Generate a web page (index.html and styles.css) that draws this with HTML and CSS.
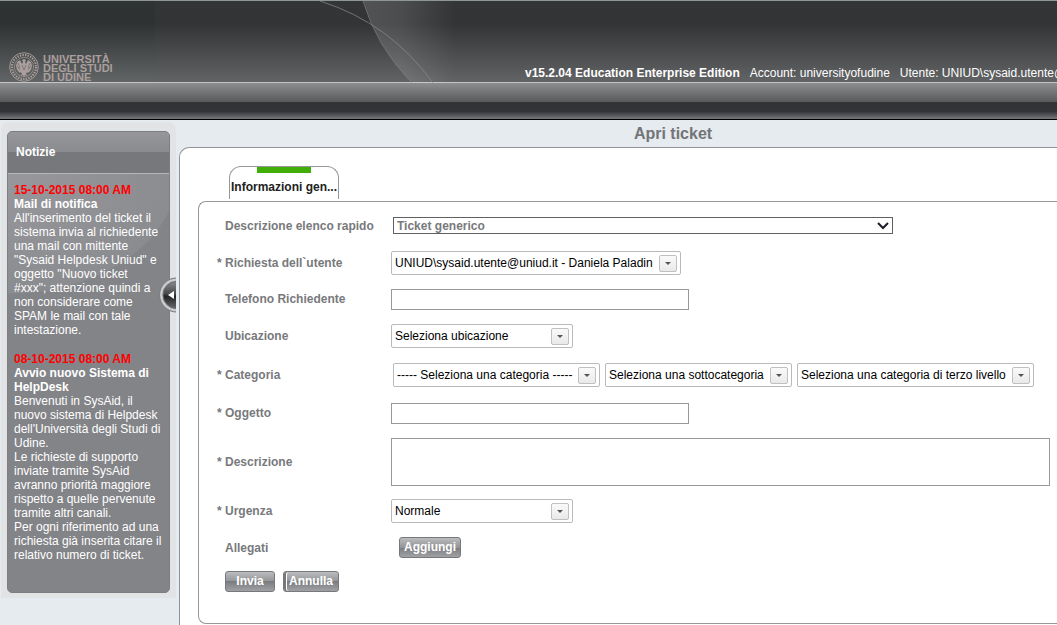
FILE: index.html
```html
<!DOCTYPE html>
<html lang="it">
<head>
<meta charset="utf-8">
<title>Apri ticket</title>
<link rel="stylesheet" href="styles.css">
</head>
<body>
<header class="header">
  <div class="banner">
    <svg class="banner-art" width="520" height="82" viewBox="0 0 520 82" aria-hidden="true">
      <defs>
        <linearGradient id="glow" gradientUnits="userSpaceOnUse" x1="363" x2="455" y1="0" y2="0">
          <stop offset="0" stop-color="#fff" stop-opacity=".15"/>
          <stop offset=".4" stop-color="#fff" stop-opacity=".12"/>
          <stop offset="1" stop-color="#fff" stop-opacity="0"/>
        </linearGradient>
      </defs>
      <path d="M363 0Q376 45 412 82H480V0Z" fill="url(#glow)"/>
      <path d="M320 0Q390 22 433 82" fill="none" stroke="#8b8d8e" stroke-opacity=".7"/>
      <path d="M363 0Q376 45 412 82" fill="none" stroke="#8b8d8e" stroke-opacity=".45"/>
    </svg>
    <div class="brand">
      <svg class="seal" width="30" height="30" viewBox="0 0 30 30" aria-hidden="true">
        <g fill="none" stroke="#aa9f9e">
          <circle cx="15" cy="15" r="14.3" stroke-width=".9"/>
          <circle cx="15" cy="15" r="12" stroke-width="2.2" stroke-dasharray="1.4 1.2"/>
          <circle cx="15" cy="15" r="9.6" stroke-width=".7"/>
        </g>
        <path d="M15 7l2 1-1 2 1 2 2-4 3 2 1 4-1 4-3 3-1-1-1 2 2 2-3-1-1 2-1-2-3 1 2-2-1-2-1 1-3-3-1-4 1-4 3-2 2 4 1-2-1-2z" fill="#aa9f9e"/>
        <path d="M9 11l2 5M21 11l-2 5M13 13l2 5 2-5M8 14l3 4M22 14l-3 4" stroke="#666868" stroke-width=".7" fill="none"/>
      </svg>
      <div class="brand-name">UNIVERSITÀ<br>DEGLI STUDI<br>DI UDINE</div>
    </div>
    <div class="account">
      <strong>v15.2.04 Education Enterprise Edition</strong>
      <span>Account: universityofudine</span>
      <span>Utente: UNIUD\sysaid.utente@</span>
    </div>
  </div>
  <div class="band"></div>
  <div class="band-dark"></div>
</header>
<div class="page">
  <aside class="sidebar">
    <section class="news">
      <h2 class="news-title">Notizie</h2>
      <div class="news-body">
        <article>
          <time class="news-date">15-10-2015 08:00 AM</time>
          <h3 class="news-head">Mail di notifica</h3>
          <p>All'inserimento del ticket il sistema invia al richiedente una mail con mittente "Sysaid Helpdesk Uniud" e oggetto "Nuovo ticket #xxx"; attenzione quindi a non considerare come SPAM le mail con tale intestazione.</p>
        </article>
        <article>
          <time class="news-date">08-10-2015 08:00 AM</time>
          <h3 class="news-head">Avvio nuovo Sistema di HelpDesk</h3>
          <p>Benvenuti in SysAid, il nuovo sistema di Helpdesk dell'Università degli Studi di Udine.</p>
          <p>Le richieste di supporto inviate tramite SysAid avranno priorità maggiore rispetto a quelle pervenute tramite altri canali.</p>
          <p>Per ogni riferimento ad una richiesta già inserita citare il relativo numero di ticket.</p>
        </article>
      </div>
    </section>
    <button class="collapse" type="button" aria-label="Nascondi notizie">
      <svg width="17" height="36" viewBox="0 0 17 36" aria-hidden="true">
        <defs>
          <linearGradient id="knob" x1="0" x2="0" y1="0" y2="1">
            <stop offset="0" stop-color="#8a8b8d"/>
            <stop offset=".45" stop-color="#48494b"/>
            <stop offset=".55" stop-color="#242527"/>
            <stop offset="1" stop-color="#66676a"/>
          </linearGradient>
        </defs>
        <circle cx="17.5" cy="18" r="17" fill="#bcbdbf" stroke="#7b7c7f"/>
        <circle cx="17.5" cy="18" r="15.5" fill="none" stroke="#d3d4d5"/>
        <circle cx="17.5" cy="18" r="13.5" fill="url(#knob)" stroke="#66676a"/>
        <path d="M9 18l6-4v8z" fill="#fff"/>
      </svg>
    </button>
  </aside>
  <main class="main">
    <h1 class="title">Apri ticket</h1>
    <div class="sheet">
      <button class="tab" type="button"><span class="tab-mark"></span>Informazioni gen...</button>
      <form class="form">
        <div class="row">
          <label class="label" for="quick">Descrizione elenco rapido</label>
          <div class="field inset">
            <span class="plain-select">
              <select id="quick"><option>Ticket generico</option></select>
              <svg class="chevron" width="12" height="8" viewBox="0 0 12 8" aria-hidden="true"><path d="M1 1l5 5 5-5" fill="none" stroke="#1c1c2c" stroke-width="2"/></svg>
            </span>
          </div>
        </div>
        <div class="row">
          <label class="label" for="user"><span class="star">*</span>Richiesta dell`utente</label>
          <div class="field"><span class="combo w-user"><select id="user"><option>UNIUD\sysaid.utente@uniud.it - Daniela Paladin</option></select></span></div>
        </div>
        <div class="row row-text">
          <label class="label" for="phone">Telefono Richiedente</label>
          <div class="field"><input class="text" id="phone" type="text"></div>
        </div>
        <div class="row">
          <label class="label" for="place">Ubicazione</label>
          <div class="field"><span class="combo w-short"><select id="place"><option>Seleziona ubicazione</option></select></span></div>
        </div>
        <div class="row row-mid">
          <label class="label" for="cat1"><span class="star">*</span>Categoria</label>
          <div class="field inset">
            <span class="combo w-cat1"><select id="cat1"><option>----- Seleziona una categoria -----</option></select></span>
            <span class="combo w-cat2"><select id="cat2" aria-label="Sottocategoria"><option>Seleziona una sottocategoria</option></select></span>
            <span class="combo w-cat3"><select id="cat3" aria-label="Categoria di terzo livello"><option>Seleziona una categoria di terzo livello</option></select></span>
          </div>
        </div>
        <div class="row row-text">
          <label class="label" for="subject"><span class="star">*</span>Oggetto</label>
          <div class="field"><input class="text" id="subject" type="text"></div>
        </div>
        <div class="row row-tall">
          <label class="label" for="desc"><span class="star">*</span>Descrizione</label>
          <div class="field"><textarea class="area" id="desc"></textarea></div>
        </div>
        <div class="row">
          <label class="label" for="urgency"><span class="star">*</span>Urgenza</label>
          <div class="field"><span class="combo w-short"><select id="urgency"><option>Normale</option></select></span></div>
        </div>
        <div class="row">
          <label class="label" for="attach">Allegati</label>
          <div class="field attach"><button class="btn" id="attach" type="button">Aggiungi</button></div>
        </div>
        <div class="actions">
          <button class="btn btn-send" type="submit">Invia</button>
          <button class="btn btn-cancel" type="reset">Annulla</button>
        </div>
      </form>
    </div>
  </main>
</div>
</body>
</html>
```

FILE: styles.css
```css
*, *::before, *::after { box-sizing: border-box; }

body {
  margin: 0;
  min-height: 100vh;
  display: flex;
  flex-direction: column;
  overflow-x: hidden;
  background: #e5ebee;
  font: 12px/14px "Liberation Sans", Arial, sans-serif;
}

h1, h2, h3, p { margin: 0; }
select, input, textarea, button { font: inherit; margin: 0; }

/* Header */
.header { border-bottom: 1px solid #000; overflow: hidden; }

.banner {
  position: relative;
  height: 83px;
  display: flex;
  align-items: flex-end;
  border-top: 1px solid #8f9696;
  border-bottom: 1px solid #c2c4c6;
  background: linear-gradient(#343537, #333436 28%, #626364);
}
.banner-art { position: absolute; left: 0; top: 0; }

.brand {
  position: relative;
  flex: 0 0 155px;
  align-self: stretch;
  display: flex;
  align-items: flex-end;
  gap: 4px;
  padding-left: 9px;
  background: linear-gradient(#2f3333, #2e3233 28%, #626565);
}
.brand-name {
  color: #aa9f9e;
  font-size: 11px;
  font-weight: bold;
  line-height: 9px;
  white-space: nowrap;
}
.seal { flex: none; }

.account {
  position: relative;
  display: flex;
  gap: 10px;
  margin-left: 370px;
  padding-bottom: 2px;
  color: #fff;
  white-space: nowrap;
}

.band { height: 19px; background: linear-gradient(#8d8e90, #58595b); }
.band-dark { height: 17px; background: linear-gradient(#323337, #333438 55%, #77787a); }

/* Page */
.page { flex: 1; display: flex; align-items: stretch; }

.sidebar {
  position: relative;
  flex: 0 0 175px;
  align-self: flex-start;
  margin: 2px 3px 0 1px;
  padding: 9px 6px 5px;
  border-radius: 8px 8px 0 0;
  background: #e2e3e5;
}
.news {
  border: 1px solid #7d7e82;
  border-radius: 5px;
  overflow: hidden;
  background: #838488;
  color: #fff;
}
.news-title {
  height: 42px;
  padding: 0 8px;
  font-size: 12px;
  line-height: 40px;
  border-bottom: 1px solid #b6b7b9;
  background: linear-gradient(#97979b, #8a8b8f 50%, #77787c 50%, #77787c);
}
.news-body {
  display: flex;
  flex-direction: column;
  gap: 15px;
  padding: 9px 7px 30px 6px;
  background: radial-gradient(ellipse 170px 120px at 0 0, #98989c, #8b8c90 99%, #838488);
}
.news-date { display: block; color: #f00; font-weight: bold; }
.news-head { font-size: 12px; }

.collapse {
  position: absolute;
  right: 0;
  top: 155px;
  width: 17px;
  height: 36px;
  padding: 0;
  border: 0;
  background: none;
}
.collapse svg { display: block; }

.main { flex: 1; min-width: 0; display: flex; flex-direction: column; }
.title {
  padding: 1px 0 0 110px;
  color: #737477;
  font-size: 16px;
  line-height: 26px;
  text-align: center;
}
.sheet {
  flex: 1;
  padding: 18px 0 1px 18px;
  border: solid #919396;
  border-width: 1px 0 0 1px;
  border-radius: 10px 0 0 0;
  background: #fff;
}

.tab {
  display: flex;
  flex-direction: column;
  align-items: center;
  gap: 7px;
  width: 110px;
  height: 33px;
  margin: 0 0 2px 31px;
  padding: 0;
  border: 1px solid #96979a;
  border-bottom: 0;
  border-radius: 12px 12px 0 0;
  background: #fff;
  color: #222;
  font-weight: bold;
  white-space: nowrap;
}
.tab-mark { width: 54px; height: 6px; background: #40ae06; }

/* Form */
.form {
  padding: 5px 7px 31px 18px;
  border: solid #96979a;
  border-width: 1px 0 1px 1px;
  border-radius: 8px 0 0 8px;
  color: #78797c;
}
.row { display: flex; align-items: center; min-height: 37px; }
.row-text { min-height: 36px; }
.row-mid { min-height: 41px; }
.row-tall { min-height: 61px; }
.label { flex: 0 0 174px; padding-left: 8px; font-weight: bold; }
.star { display: inline-block; width: 8px; margin-left: -8px; }
.field { flex: 1; min-width: 0; display: flex; gap: 5px; }
.inset { padding-left: 2px; }
.attach { padding-left: 8px; }

.plain-select { position: relative; width: 500px; }
.plain-select select {
  appearance: none;
  display: block;
  width: 100%;
  height: 17px;
  padding: 0 3px;
  border: 1px solid #5f6062;
  border-radius: 0;
  background: #fff;
  color: #78797c;
  font-weight: bold;
}
.chevron { position: absolute; right: 4px; top: 5px; pointer-events: none; }

.combo { position: relative; }
.combo select {
  appearance: none;
  display: block;
  width: 100%;
  height: 24px;
  padding: 0 22px 0 3px;
  border: 1px solid #b9babb;
  border-radius: 2px;
  background: #fff;
  color: #000;
}
.combo::before {
  content: "";
  position: absolute;
  right: 4px;
  top: 4px;
  width: 18px;
  height: 17px;
  border: 1px solid #c0c0c0;
  border-radius: 2px;
  background: linear-gradient(#fafafa, #e9e9e9);
  pointer-events: none;
}
.combo::after {
  content: "";
  position: absolute;
  right: 10px;
  top: 11px;
  border: 3px solid transparent;
  border-top-color: #555;
  border-bottom: 0;
  pointer-events: none;
}
.w-user { width: 290px; }
.w-short { width: 182px; }
.w-cat1 { width: 207px; }
.w-cat2 { width: 187px; }
.w-cat3 { width: 237px; }

.text, .area { border: 1px solid #97989a; border-radius: 0; background: #fff; color: #000; }
.text { width: 298px; height: 21px; padding: 0 3px; }
.area { display: block; width: 100%; height: 48px; padding: 3px; resize: none; }

.btn {
  height: 21px;
  padding: 0 4px;
  border: 1px solid #77787b;
  border-radius: 3px;
  background: linear-gradient(#bbbcbe, #939497 50%, #7b7c80 50%, #a0a1a3);
  color: #fff;
  font-weight: bold;
  line-height: 17px;
}
.actions { display: flex; gap: 8px; padding: 5px 0 0 8px; }
.btn-send { width: 50px; }
.btn-cancel { width: 56px; box-shadow: inset 2px 0 #77787b, inset 3px 0 #fff; }
```
